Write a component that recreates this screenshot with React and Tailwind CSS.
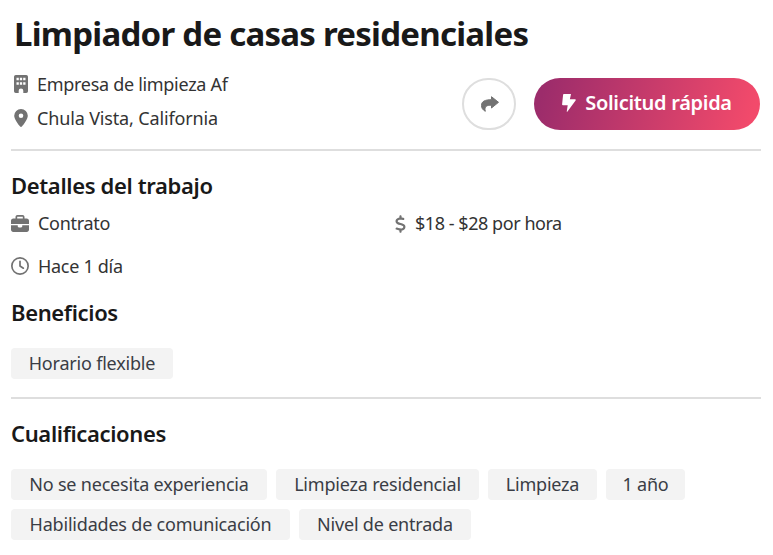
import React from 'react';
import { FaBriefcase, FaDollarSign, FaRegClock } from 'react-icons/fa6';

const qualifications = [
  { label: 'No se necesita experiencia', size: 'w-[256px]' },
  { label: 'Limpieza residencial', size: 'w-[203px]' },
  { label: 'Limpieza', size: 'w-[109px]' },
  { label: '1 año', size: 'w-[79px]' },
  { label: 'Habilidades de comunicación', size: 'w-[279px]' },
  { label: 'Nivel de entrada', size: 'w-[172px]' },
];

function BuildingIcon() {
  return (
    <svg viewBox="0 0 14 18" className="mr-[9px] ml-[3px] h-[18px] w-[14px]" fill="#727272" fillRule="evenodd">
      <path d="M1.8 0h10.4Q14 0 14 1.8v14.4q0 1.8-1.8 1.8H9.3v-2.2a2.3 2.3 0 0 0-4.6 0V18H1.8Q0 18 0 16.2V1.8Q0 0 1.8 0zM2.5 2.8v2.4h2.3V2.8zM5.85 2.8v2.4h2.3V2.8zM9.2 2.8v2.4h2.3V2.8zM2.5 7.3v2.4h2.3V7.3zM5.85 7.3v2.4h2.3V7.3zM9.2 7.3v2.4h2.3V7.3z" />
    </svg>
  );
}

function PinIcon() {
  return (
    <svg viewBox="0 0 14 18" className="mr-[9px] ml-[3px] h-[18px] w-[14px]" fill="#727272" fillRule="evenodd">
      <path d="M7 0a6.8 6.8 0 0 1 6.8 6.8C13.8 10 9.8 15.5 7.9 17.6q-.9.8-1.8 0C4.200 15.5.2 10 .2 6.8A6.8 6.8 0 0 1 7 0zM7 4.500a2.300 2.300 0 1 0 0 4.600 2.300 2.300 0 0 0 0-4.600z" />
    </svg>
  );
}

function ShareIcon() {
  return (
    <svg viewBox="0 0 18 16" className="h-4 w-[18px]" fill="#727272" stroke="#727272" strokeWidth="1" strokeLinejoin="round">
      <path d="M10.5.7 17.5 6.300 10.500 12V9.200C6 9.200 3 10 4.300 15.300 1.600 13.800.5 11.900.5 9.500.5 5.300 4 3.700 10.500 3.700z" />
    </svg>
  );
}

function BoltIcon() {
  return (
    <svg viewBox="0 0 14 18" className="h-[18px] w-[14px]" fill="#fff">
      <path d="M1.8 0H9L7.900 5.300h5.200q1.200 0 .5 1.100L5.500 17.600q-.8.700-.7-.3L5.700 11.300H1Q0 11.300.1 10.300L1.100.8Q1.200 0 1.800 0z" />
    </svg>
  );
}

function Chip({ label, size }) {
  return (
    <li className={`${size} h-[31px] rounded-sm bg-[#f3f3f3] text-center leading-[30px] tracking-[-0.2px] text-[#3a3d45] whitespace-nowrap`}>
      {label}
    </li>
  );
}

function SectionTitle({ children }) {
  return <h2 className="text-[22px] leading-7 font-semibold tracking-[-0.35px] text-[#191919]">{children}</h2>;
}

export default function App() {
  return (
    <main className="h-[555px] overflow-hidden bg-white pl-[11px] pr-3 font-['Noto_Sans',sans-serif] font-stretch-[87.5%] text-[18px] tracking-[-0.3px] text-[#333]">
      <header className="h-[151px] border-b-2 border-[#dedede] pt-3">
        <h1 className="pl-[3px] text-[33px] leading-[44px] font-bold tracking-[-0.75px] text-[#191919] whitespace-nowrap">
          Limpiador de casas residenciales
        </h1>
        <div className="mt-[11px] flex items-center justify-between">
          <div className="flex flex-col">
            <p className="flex h-[34px] items-center">
              <BuildingIcon />
              Empresa de limpieza Af
            </p>
            <p className="flex h-[34px] items-center tracking-[-0.15px]">
              <PinIcon />
              Chula Vista, California
            </p>
          </div>
          <div className="mt-[6px] mr-px flex gap-[18px]">
            <button className="flex h-[52px] w-[54px] items-center justify-center rounded-full border-2 border-[#dedede] pl-px">
              <ShareIcon />
            </button>
            <button className="flex h-[52px] w-[226px] items-center justify-center gap-[9px] rounded-full bg-linear-[105deg] from-[#9c2c6b] from-5% to-[#f24a6b] to-95% pb-0.5 text-[20px] font-semibold tracking-[-0.3px] text-white">
              <BoltIcon />
              Solicitud rápida
            </button>
          </div>
        </div>
      </header>

      <section className="pt-5">
        <SectionTitle>Detalles del trabajo</SectionTitle>
        <div className="mt-[3px] grid grid-cols-[384px_1fr]">
          <p className="flex h-[43px] items-center gap-[9px]">
            <FaBriefcase className="size-[18px] text-[#727272]" />
            Contrato
          </p>
          <p className="flex h-[43px] items-center gap-[9px] tracking-[-0.45px]">
            <FaDollarSign className="h-[18px] w-[11px] text-[#727272]" />
            $18 - $28 por hora
          </p>
          <p className="flex h-[42px] items-center gap-[9px]">
            <FaRegClock className="size-[18px] text-[#727272]" />
            Hace 1 día
          </p>
        </div>
      </section>

      <section className="h-[112px] border-b-2 border-[#dedede] pt-[11px]">
        <SectionTitle>Beneficios</SectionTitle>
        <ul className="mt-[22px] flex">
          <Chip label="Horario flexible" size="w-[162px]" />
        </ul>
      </section>

      <section className="pt-5">
        <SectionTitle>Cualificaciones</SectionTitle>
        <ul className="mt-[22px] flex flex-wrap gap-[9px]">
          {qualifications.map((item) => (
            <Chip key={item.label} {...item} />
          ))}
        </ul>
      </section>
    </main>
  );
}
